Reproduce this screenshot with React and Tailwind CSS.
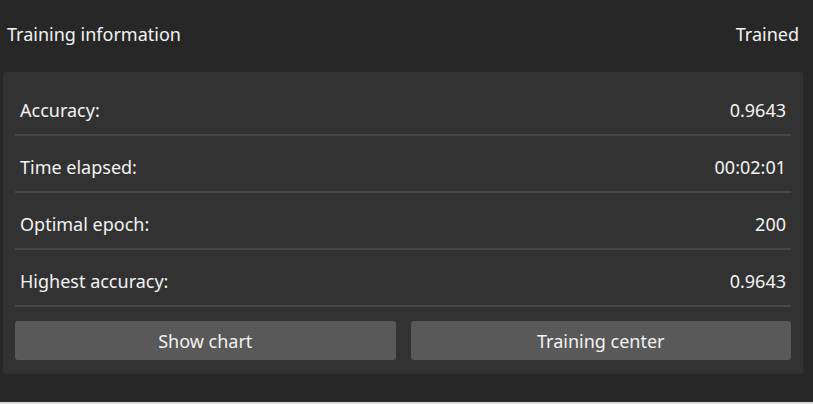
import React from "react";

const rows = [
  { label: "Accuracy:", value: "0.9643" },
  { label: "Time elapsed:", value: "00:02:01" },
  { label: "Optimal epoch:", value: "200" },
  { label: "Highest accuracy:", value: "0.9643" },
];

export default function App() {
  return (
    <div
      className="w-[813px] h-[404px] bg-[#272727] text-[#f2f2f2] flex flex-col"
      style={{ fontFamily: '"Noto Sans", "Open Sans", sans-serif' }}
    >
      <div className="h-[72px] flex items-center justify-between pl-[7px] pr-[14px] text-[18px] pb-[4px]">
        <span>Training information</span>
        <span>Trained</span>
      </div>
      <div className="ml-[3px] w-[800px] bg-[#323232] rounded-[3px] px-[12px] pt-[7px] pb-[14px]">
        {rows.map((r) => (
          <div
            key={r.label}
            className="h-[57px] flex items-center justify-between px-[5px] pt-[7px] border-b-2 border-[#474747] text-[18px]"
          >
            <span>{r.label}</span>
            <span>{r.value}</span>
          </div>
        ))}
        <div className="flex gap-[15px] mt-[14px]">
          <button className="flex-1 h-[39px] bg-[#595959] rounded-[3px] text-[18px] text-[#f2f2f2] pt-[1px]">
            Show chart
          </button>
          <button className="flex-1 h-[39px] bg-[#595959] rounded-[3px] text-[18px] text-[#f2f2f2] pt-[1px]">
            Training center
          </button>
        </div>
      </div>
      <div className="flex-1" />
      <div className="h-[2px] bg-[#d9d9d9]" />
    </div>
  );
}
